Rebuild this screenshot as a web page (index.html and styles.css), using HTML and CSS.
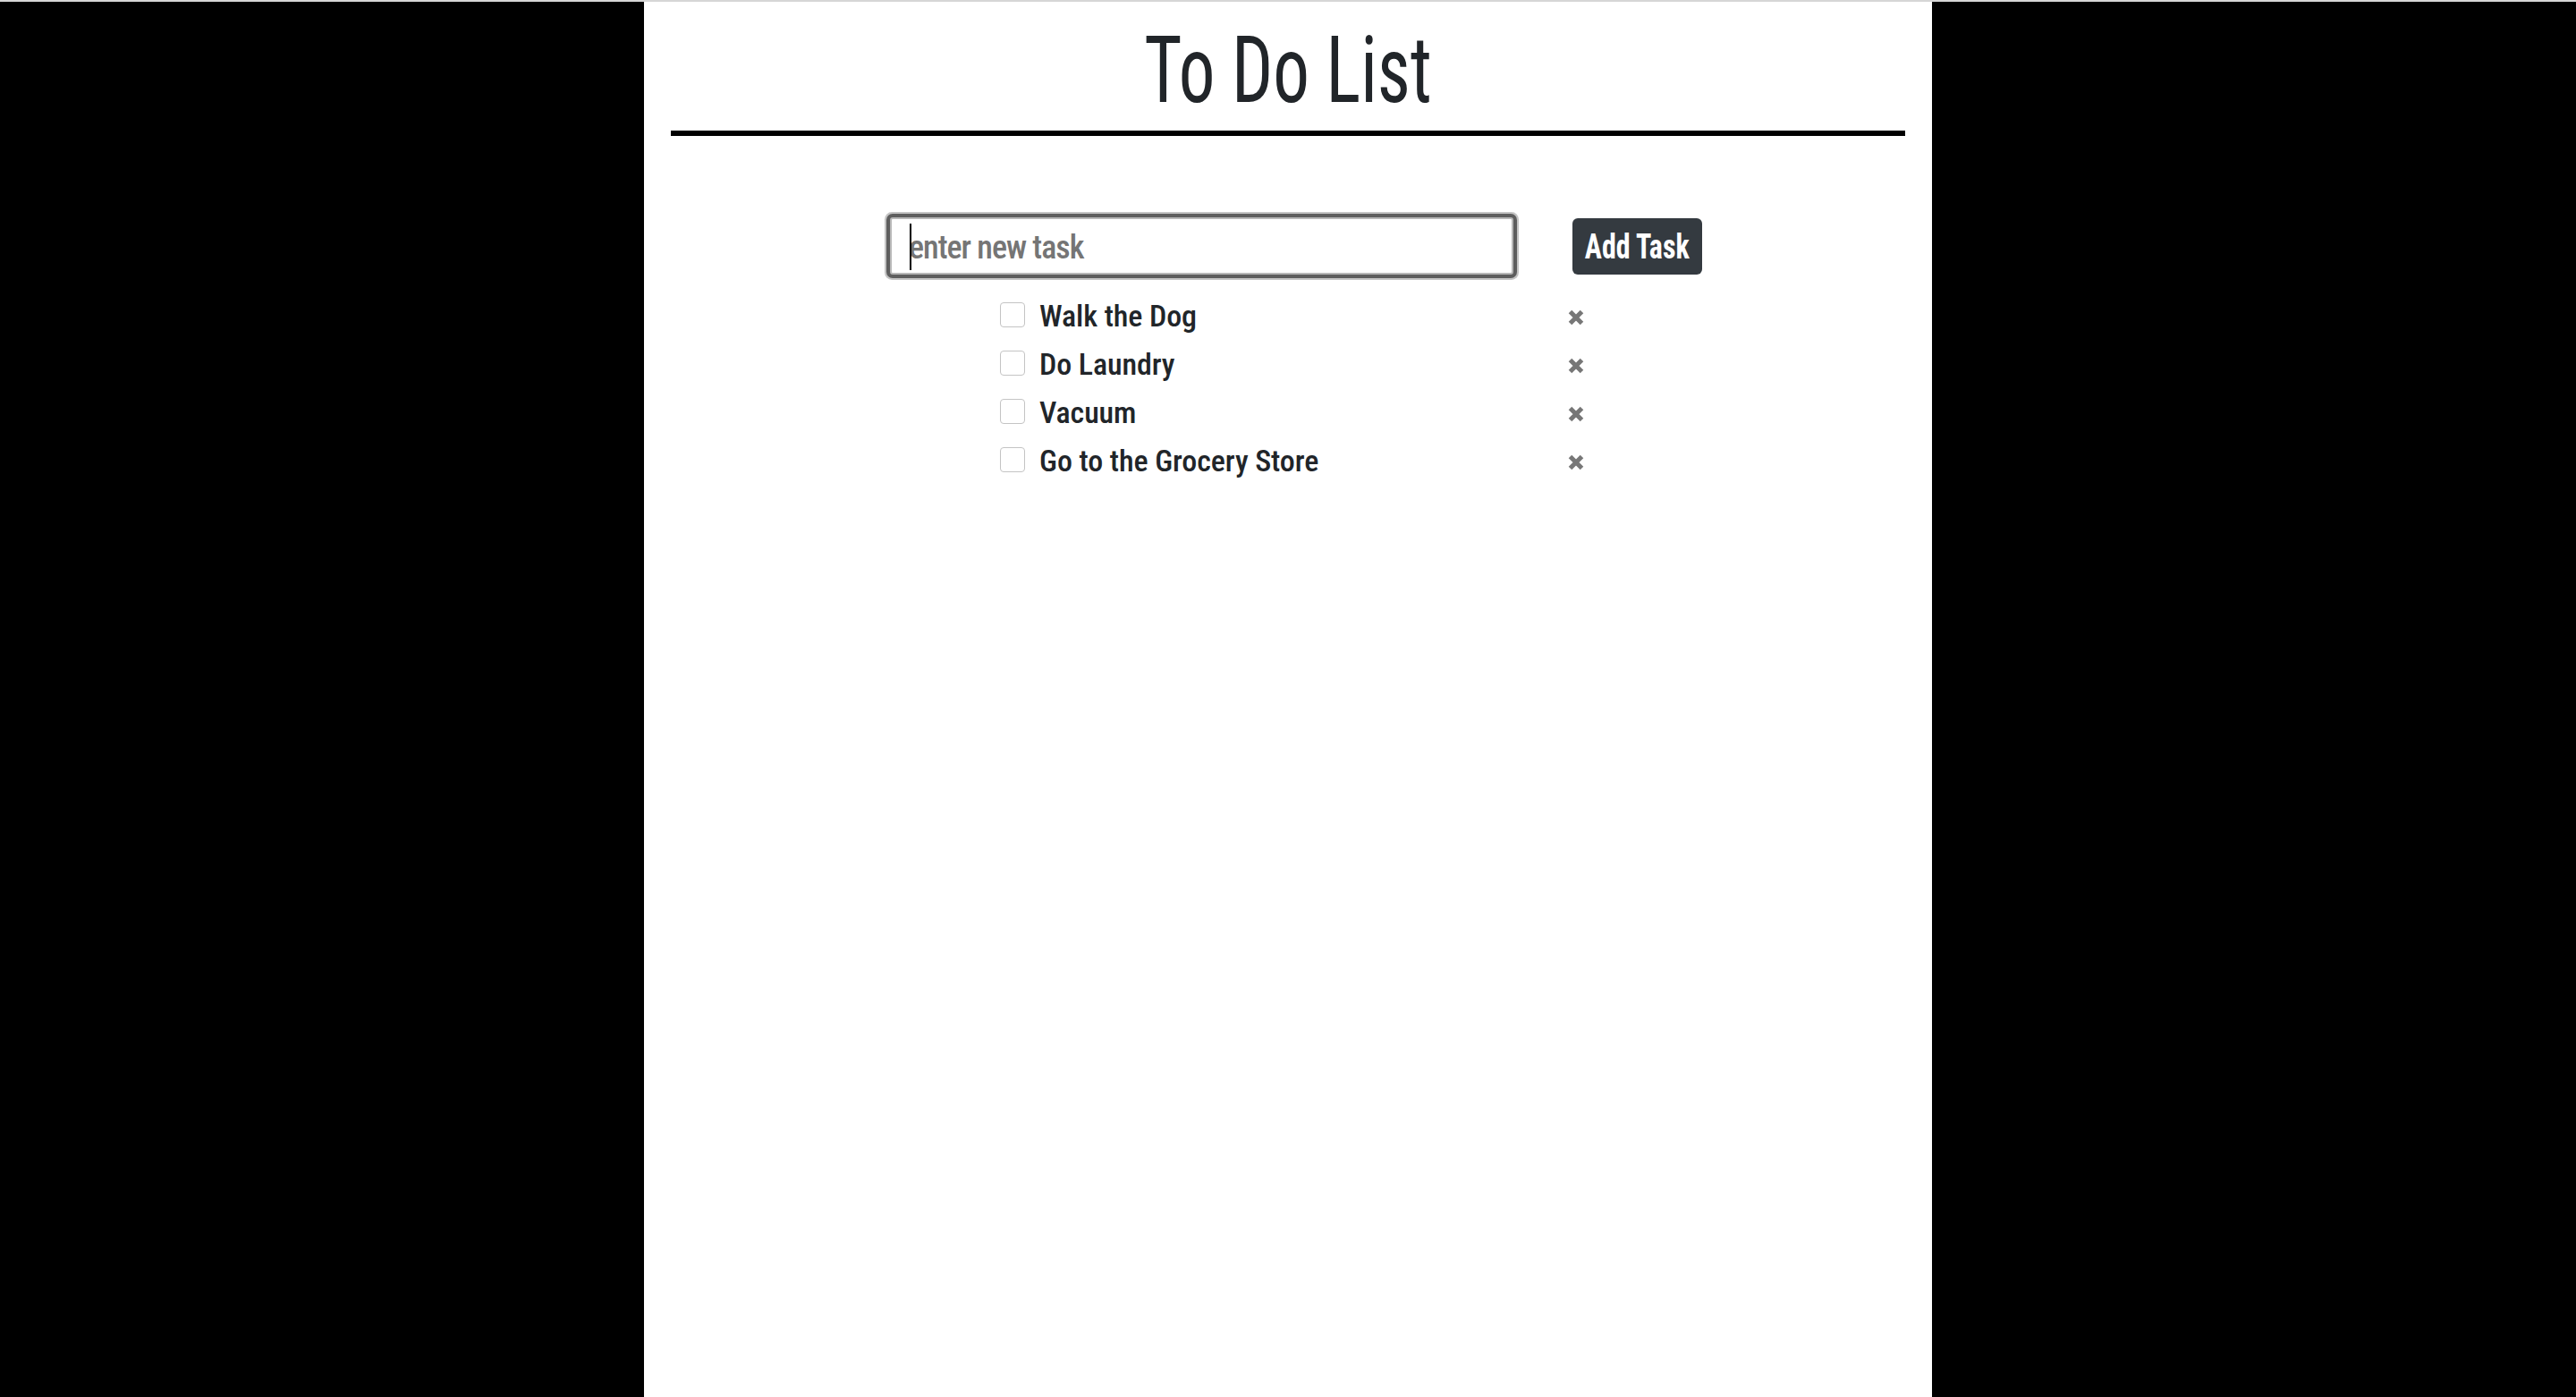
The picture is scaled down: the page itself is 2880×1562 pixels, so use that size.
FILE: index.html
```html
<!DOCTYPE html>
<html lang="en">
<head>
<meta charset="utf-8">
<title>To Do List</title>
<link rel="stylesheet" href="styles.css">
</head>
<body>
<main class="page">
  <h1 class="title"><span class="title-text">To Do List</span></h1>
  <div class="rule"></div>
  <form class="add-form">
    <div class="input-wrap">
      <input class="task-input" type="text" placeholder="enter new task">
    </div>
    <button class="add-btn" type="button"><span class="btn-text">Add Task</span></button>
  </form>
  <ul class="tasks">
    <li class="task"><span class="check"></span><span class="task-text">Walk the Dog</span><svg class="remove" viewBox="0 0 18 18"><path d="M2.5 2.5L15.5 15.5M15.5 2.5L2.5 15.5"/></svg></li>
    <li class="task"><span class="check"></span><span class="task-text">Do Laundry</span><svg class="remove" viewBox="0 0 18 18"><path d="M2.5 2.5L15.5 15.5M15.5 2.5L2.5 15.5"/></svg></li>
    <li class="task"><span class="check"></span><span class="task-text">Vacuum</span><svg class="remove" viewBox="0 0 18 18"><path d="M2.5 2.5L15.5 15.5M15.5 2.5L2.5 15.5"/></svg></li>
    <li class="task"><span class="check"></span><span class="task-text">Go to the Grocery Store</span><svg class="remove" viewBox="0 0 18 18"><path d="M2.5 2.5L15.5 15.5M15.5 2.5L2.5 15.5"/></svg></li>
  </ul>
</main>
</body>
</html>
```
FILE: styles.css
```css
html, body {
  margin: 0;
  padding: 0;
}
body {
  background: #000;
  border-top: 2px solid #d6d6d6;
}
.page {
  box-sizing: border-box;
  width: 1440px;
  min-height: calc(100vh - 2px);
  margin: 0 auto;
  padding: 0 30px;
  background: #fff;
  color: #212529;
  font-family: "Roboto Condensed", "Roboto", sans-serif;
}
.title {
  box-sizing: border-box;
  margin: 0;
  height: 144px;
  padding-top: 10px;
  font-size: 104px;
  line-height: 134px;
  font-weight: 400;
  text-align: center;
}
.title-text {
  display: inline-block;
  transform: scaleX(0.78);
}
.rule {
  height: 6px;
  background: #000;
}
.add-form {
  display: flex;
  align-items: center;
  justify-content: center;
  gap: 66px;
  margin: 91px 0 0;
  padding-left: 18px;
}
.input-wrap {
  position: relative;
  display: flex;
}
.input-wrap::after {
  content: "";
  position: absolute;
  left: 22px;
  top: 7px;
  width: 2px;
  height: 52px;
  background: #000;
}
.task-input {
  box-sizing: border-box;
  width: 697px;
  height: 64px;
  padding: 3px 19px 0;
  border: 2px solid #b8b8b8;
  border-radius: 3px;
  box-shadow: 0 0 0 4px #5e5e5e, 0 0 0 6px #c4c4c4;
  outline: none;
  font-family: inherit;
  font-size: 36px;
  font-weight: 500;
  letter-spacing: -1px;
  color: #212529;
}
.task-input::placeholder {
  color: #757575;
}
.add-btn {
  box-sizing: border-box;
  width: 145px;
  height: 63px;
  padding: 2px 0 0;
  border: none;
  border-radius: 6px;
  background: #343a40;
  color: #fff;
  font-family: inherit;
  font-size: 39px;
  font-weight: 700;
  white-space: nowrap;
}
.btn-text {
  display: inline-block;
  transform: scaleX(0.82);
}
.tasks {
  list-style: none;
  box-sizing: border-box;
  width: 662px;
  margin: 18px auto 0;
  padding: 0 0 0 8px;
}
.task {
  display: flex;
  align-items: center;
  height: 54px;
  font-size: 34px;
  font-weight: 500;
}
.check {
  box-sizing: border-box;
  flex: none;
  width: 28px;
  height: 28px;
  margin: 0 16px 0 1px;
  border: 1px solid #c4c4c4;
  border-radius: 4px;
  background: #fff;
}
.task-text {
  flex: 1;
  padding-top: 1px;
  letter-spacing: -0.1px;
}
.remove {
  flex: none;
  width: 18px;
  height: 18px;
  margin: 5px 0 0;
  fill: none;
  stroke: #777;
  stroke-width: 5;
}
```
